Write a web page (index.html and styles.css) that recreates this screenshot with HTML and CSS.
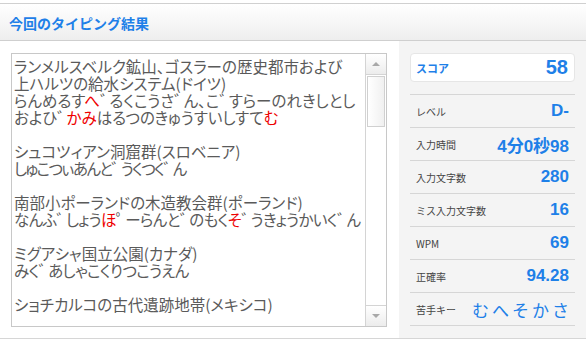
FILE: index.html
```html
<!DOCTYPE html>
<html lang="ja">
<head>
<meta charset="utf-8">
<link rel="stylesheet" href="styles.css">
</head>
<body>
<div class="page">
  <div class="header"><h1 class="title">今回のタイピング結果</h1></div>
  <div class="main">
    <div class="left">
      <div class="textarea">
        <div class="text">ランメルスベルク鉱山、ゴスラーの歴史都市および
上ハルツの給水システム(ドイツ)
らんめるす<span class="miss">へ</span><span class="dk">゛</span>るくこうさ<span class="dk">゛</span>ん、こ<span class="dk">゛</span>すらーのれきしとし
およひ<span class="dk">゛</span><span class="miss">かみ</span>はるつのきゅうすいしすて<span class="miss">む</span>

シュコツィアン洞窟群(スロベニア)
<span class="tighter">しゅこつぃあんと<span class="dk">゛</span>うくつく<span class="dk">゛</span>ん</span>

南部小ポーランドの木造教会群(ポーランド)
<span class="tight">なんふ<span class="dk">゛</span>しょう<span class="miss">ほ</span><span class="dk">゜</span>ーらんと<span class="dk">゛</span>のもく<span class="miss">そ</span><span class="dk">゛</span>うきょうかいく<span class="dk">゛</span>ん</span>

ミグアシャ国立公園(カナダ)
<span class="tight">みく<span class="dk">゛</span>あしゃこくりつこうえん</span>

ショチカルコの古代遺跡地帯(メキシコ)</div>
        <div class="scrollbar">
          <div class="sb-btn sb-up"><span class="arrow-up"></span></div>
          <div class="sb-track"><div class="sb-thumb"></div></div>
          <div class="sb-btn sb-down"><span class="arrow-down"></span></div>
        </div>
      </div>
    </div>
    <div class="panel">
      <div class="score-wrap">
        <div class="score">
          <span class="score-label">スコア</span>
          <span class="score-value">58</span>
        </div>
      </div>
      <div class="row"><span class="label">レベル</span><span class="value">D-</span></div>
      <div class="row"><span class="label">入力時間</span><span class="value">4分0秒98</span></div>
      <div class="row"><span class="label">入力文字数</span><span class="value">280</span></div>
      <div class="row"><span class="label">ミス入力文字数</span><span class="value">16</span></div>
      <div class="row"><span class="label">WPM</span><span class="value">69</span></div>
      <div class="row"><span class="label">正確率</span><span class="value">94.28</span></div>
      <div class="row"><span class="label">苦手キー</span><span class="keys">むへそかさ</span></div>
    </div>
  </div>
</div>
</body>
</html>
```

FILE: styles.css
```css
html, body {
  margin: 0;
  padding: 0;
  background: #ffffff;
}
body {
  font-family: "Noto Sans CJK JP", "Noto Sans", sans-serif;
  width: 586px;
  height: 342px;
  overflow: hidden;
}
.page {
  margin-top: 3px;
  border-top: 1px solid #d0d0d0;
  border-bottom: 1px solid #d6d6d6;
}
.header {
  height: 36px;
  background: linear-gradient(#ffffff, #eeeeee);
  border-bottom: 1px solid #cfcfcf;
  display: flex;
  align-items: center;
  padding-left: 9px;
}
.title {
  margin: 0;
  font-size: 14px;
  font-weight: bold;
  color: #1e80e8;
  line-height: 1;
  padding-top: 1px;
}
.main {
  display: flex;
  height: 297px;
}
.left {
  width: 388px;
  padding: 12px 0 0 11px;
  box-sizing: border-box;
  background: #ffffff;
  flex: none;
}
.panel {
  flex: 1;
  background: #f4f4f4;
  padding: 12px 11px 0 11px;
  margin-left: 11px;
}
.textarea {
  width: 376px;
  height: 274px;
  box-sizing: border-box;
  border: 1px solid #c8c8c8;
  display: flex;
  background: #fff;
}
.text {
  flex: 1;
  white-space: pre;
  overflow: hidden;
  font-size: 15.5px;
  line-height: 17px;
  color: #5a5a5a;
  padding: 4px 0 0 2px;
  font-feature-settings: "palt";
}
.tight {
  letter-spacing: -0.6px;
}
.tighter {
  letter-spacing: -1.6px;
}
.dk {
  letter-spacing: -6px;
}
.miss {
  color: #ee0000;
}
.scrollbar {
  width: 20px;
  border-left: 1px solid #d4d4d4;
  display: flex;
  flex-direction: column;
  background: #ffffff;
  flex: none;
}
.sb-btn {
  height: 20px;
  background: linear-gradient(#ffffff, #ececec);
  display: flex;
  align-items: center;
  justify-content: center;
}
.sb-up {
  border-bottom: 1px solid #d4d4d4;
}
.sb-down {
  border-top: 1px solid #d4d4d4;
}
.arrow-up {
  width: 0;
  height: 0;
  border-left: 4px solid transparent;
  border-right: 4px solid transparent;
  border-bottom: 4px solid #a8a8a8;
}
.arrow-down {
  width: 0;
  height: 0;
  border-left: 4px solid transparent;
  border-right: 4px solid transparent;
  border-top: 4px solid #a8a8a8;
}
.sb-track {
  flex: 1;
  padding: 1px 1px 0 1px;
}
.sb-thumb {
  height: 49px;
  border: 1px solid #d0d0d0;
  background: linear-gradient(90deg, #ffffff, #f0f0f0);
}
.score-wrap {
  padding-bottom: 12px;
  border-bottom: 1px solid #d6d6d6;
}
.score {
  height: 29px;
  box-sizing: border-box;
  background: #fff;
  border: 1px solid #e6e6e6;
  border-radius: 4px;
  display: flex;
  align-items: center;
  justify-content: space-between;
  padding: 0 6px 0 5px;
}
.score-label {
  font-size: 11px;
  color: #1e80e8;
  font-weight: bold;
}
.score-value {
  font-family: "Liberation Sans", Arial, sans-serif;
  font-weight: bold;
  font-size: 20px;
  color: #1e80e8;
}
.row {
  height: 32px;
  border-bottom: 1px solid #d6d6d6;
  display: flex;
  align-items: center;
  justify-content: space-between;
  padding: 0 6px 0 6px;
}
.label {
  font-size: 10px;
  color: #444;
}
.value {
  font-family: "Liberation Sans", Arial, "Noto Sans CJK JP", sans-serif;
  font-weight: bold;
  font-size: 17px;
  color: #1e80e8;
}
.keys {
  font-size: 17px;
  color: #1e80e8;
  letter-spacing: 3px;
  margin-right: -3px;
}
```
